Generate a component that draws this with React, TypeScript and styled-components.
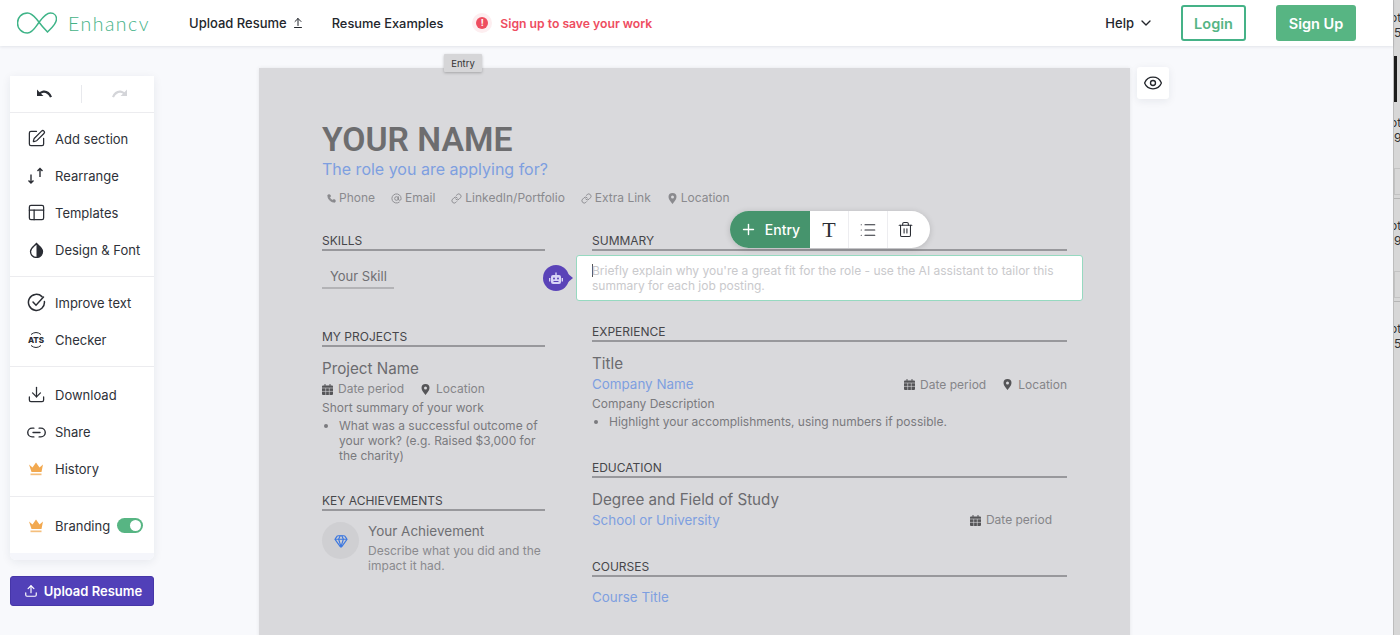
import styled, { createGlobalStyle } from 'styled-components'
import {
  SquarePen, PanelsTopLeft, Download, Link2, Upload, Eye, Plus, List, Trash2, ChevronDown,
  Phone, AtSign, Link, Gem, ArrowUpFromLine,
} from 'lucide-react'

const GlobalStyle = createGlobalStyle`
  html, body { margin: 0; padding: 0; height: 100%; overflow: hidden; }
  body { font-family: Inter, "Liberation Sans", sans-serif; background: #f8f9fc; }
`

function Logo() {
  return (
    <svg width="40" height="22" viewBox="-.5 0 40 22" fill="none" stroke="#3fb488" strokeWidth="1.5">
      <path d="M10 1C4 1 0 5.500 0 11C0 16.500 4 21 10 21C15 21 18 15 21 11C24 7 28 1 33 1C37 1 39 4 39 7C39 12 34 16 30 20C26 16 22 11 19 7C16 3.500 13 1 10 1Z" />
    </svg>
  )
}

function Crown() {
  return (
    <svg width="16" height="14" viewBox="0 0 16 14" fill="#f2a950">
      <path d="M1 2.500l3.500 3L8 .5l3.500 5 3.500-3-1.500 7.500h-10z" />
      <rect x="2.500" y="11.500" width="11" height="1.700" opacity=".75" />
    </svg>
  )
}

function Undo({ off }: { off?: boolean }) {
  return (
    <svg width="17" height="11" viewBox="0 0 17 11" fill={off ? '#d4d5d9' : '#2a2d34'}>
      <g transform={off ? 'translate(17 0) scale(-1 1)' : undefined}>
        <path d="M1 .5v6.500h6.500L5 4.700C7.800 2.800 11.500 3.500 14 8.500l2-.8C13.500 1.300 8 0 3.600 3.200z" />
      </g>
    </svg>
  )
}

function Arrows() {
  return (
    <svg width="18" height="18" viewBox="0 0 18 18" fill="none" stroke="#2a2d34" strokeWidth="1.400">
      <path d="M4 7.500V16M1.500 13.500L4 16l2.500-2.500M13 1.500V10M10.500 4L13 1.500 15.500 4" />
    </svg>
  )
}

function Contrast() {
  return (
    <svg width="15" height="16" viewBox="0 0 15 16">
      <path d="M7.500 1.500C5 4.500 1.500 6 1.500 9.500a6 6 0 0 0 12 0C13.500 6 10 4.500 7.500 1.500z" fill="none" stroke="#2a2d34" strokeWidth="1.300" />
      <path d="M7.500 1.500C10 4.500 13.500 6 13.500 9.500a6 6 0 0 1-6 6z" fill="#2a2d34" />
    </svg>
  )
}

function CheckRing() {
  return (
    <svg width="19" height="19" viewBox="0 0 19 19" fill="none" stroke="#2a2d34" strokeWidth="1.500" strokeLinecap="round">
      <path d="M15 3.600A8 8 0 1 0 17.400 8.500" />
      <path d="M6 9l3 3.200L16.500 4" />
    </svg>
  )
}

function Ats() {
  return (
    <svg width="20" height="18" viewBox="0 0 20 18" fill="none" stroke="#2a2d34" strokeWidth="1">
      <path d="M5 3.500Q10 -.5 15 3.500M5 14.500Q10 18.500 15 14.500" />
      <text x="10" y="11.500" textAnchor="middle" fontSize="8" fontWeight="800" fontFamily="Inter" fill="#2a2d34" stroke="none">ATS</text>
    </svg>
  )
}

function Bot() {
  return (
    <svg width="14" height="13" viewBox="0 0 14 13" fill="#d8d4f5">
      <rect x="2" y="3" width="10" height="9" rx="2" />
      <rect x="6.300" y=".5" width="1.400" height="3" />
      <rect x="0" y="6" width="1.400" height="3.500" />
      <rect x="12.600" y="6" width="1.400" height="3.500" />
      <circle cx="5" cy="6.500" r="1" fill="#5a43b8" />
      <circle cx="9" cy="6.500" r="1" fill="#5a43b8" />
      <rect x="4.500" y="9" width="5" height="1" fill="#5a43b8" />
    </svg>
  )
}

function CalendarMark() {
  return (
    <svg width="11" height="11" viewBox="0 0 11 11">
      <path d="M2.500 0h1v1.500h4V0h1v1.500H10a1 1 0 0 1 1 1V10a1 1 0 0 1-1 1H1a1 1 0 0 1-1-1V2.500a1 1 0 0 1 1-1h1.500z" fill="#555558" />
      <path d="M0 4h11M3.700 4v7M7.300 4v7M0 7.400h11" stroke="#d9d9dc" strokeWidth=".6" />
    </svg>
  )
}

function PinMark({ color = '#555558' }: { color?: string }) {
  return (
    <svg width="11" height="11" viewBox="0 0 11 11">
      <path fillRule="evenodd" fill={color} d="M5.500 0A4 4 0 0 1 9.500 4C9.500 6.500 6.800 9.300 5.500 11C4.200 9.300 1.500 6.500 1.500 4A4 4 0 0 1 5.500 0zM5.500 2.500a1.500 1.500 0 1 0 0 3a1.500 1.500 0 0 0 0-3z" />
    </svg>
  )
}

const mainItems = [
  { label: 'Add section', icon: <SquarePen size={19} strokeWidth={1.6} /> },
  { label: 'Rearrange', icon: <Arrows /> },
  { label: 'Templates', icon: <PanelsTopLeft size={19} strokeWidth={1.6} /> },
  { label: 'Design & Font', icon: <Contrast /> },
]

const contacts = [
  { label: 'Phone', icon: <Phone size={9} fill="#8a8a8e" stroke="#8a8a8e" /> },
  { label: 'Email', icon: <AtSign size={11} /> },
  { label: 'LinkedIn/Portfolio', icon: <Link size={11} /> },
  { label: 'Extra Link', icon: <Link size={11} /> },
  { label: 'Location', icon: <PinMark color="#8a8a8e" /> },
]

function Period({ text }: { text: string }) {
  return (
    <Meta>
      <CalendarMark />
      {text}
    </Meta>
  )
}

function Place() {
  return (
    <Meta>
      <PinMark />
      Location
    </Meta>
  )
}

export default function App() {
  return (
    <Screen>
      <GlobalStyle />
      <Workspace>
        <TopBar>
          <BrandLink>
            <Logo />
            <BrandName>Enhancv</BrandName>
          </BrandLink>
          <UploadLink>Upload Resume <ArrowUpFromLine size={12} /></UploadLink>
          <ExamplesLink>Resume Examples</ExamplesLink>
          <AlertDot>!</AlertDot>
          <AlertText>Sign up to save your work</AlertText>
          <HelpLink>Help <ChevronDown size={16} /></HelpLink>
          <LoginButton>Login</LoginButton>
          <SignUpButton>Sign Up</SignUpButton>
        </TopBar>

        <Body>
          <SideColumn>
            <SideCard>
              <UndoRow>
                <Undo />
                <UndoSep />
                <Undo off />
              </UndoRow>
              <SideGroup $top={7} $bottom={8}>
                {mainItems.map((it) => (
                  <SideItem key={it.label}><IconCell>{it.icon}</IconCell>{it.label}</SideItem>
                ))}
              </SideGroup>
              <SideGroup $top={7} $bottom={8}>
                <SideItem><IconCell><CheckRing /></IconCell>Improve text</SideItem>
                <SideItem><IconCell><Ats /></IconCell>Checker</SideItem>
              </SideGroup>
              <SideGroup $top={9} $bottom={9}>
                <SideItem><IconCell><Download size={19} strokeWidth={1.6} /></IconCell>Download</SideItem>
                <SideItem><IconCell><Link2 size={21} strokeWidth={1.6} /></IconCell>Share</SideItem>
                <SideItem><IconCell><Crown /></IconCell>History</SideItem>
              </SideGroup>
              <SideGroup $top={10} $bottom={9}>
                <SideItem><IconCell><Crown /></IconCell>Branding<Toggle /></SideItem>
              </SideGroup>
              <SideFoot />
            </SideCard>
            <UploadButton><Upload size={14} />Upload Resume</UploadButton>
          </SideColumn>

          <Sheet>
            <Tip>Entry</Tip>
            <Name>YOUR NAME</Name>
            <Role>The role you are applying for?</Role>
            <Contacts>
              {contacts.map((c) => (
                <Contact key={c.label}>{c.icon}{c.label}</Contact>
              ))}
            </Contacts>
            <Columns>
              <div>
                <Section>
                  <SectionTitle>SKILLS</SectionTitle>
                  <Skill>Your Skill</Skill>
                </Section>
                <Section $gap={40}>
                  <SectionTitle>MY PROJECTS</SectionTitle>
                  <ItemTitle>Project Name</ItemTitle>
                  <MetaRow>
                    <Period text="Date period" />
                    <Place />
                  </MetaRow>
                  <Para>Short summary of your work</Para>
                  <Bullets>
                    <li>What was a successful outcome of your work? (e.g. Raised $3,000 for the charity)</li>
                  </Bullets>
                </Section>
                <Section $gap={30}>
                  <SectionTitle>KEY ACHIEVEMENTS</SectionTitle>
                  <Achievement>
                    <GemBadge><Gem size={14} stroke="#3d78e0" strokeWidth={2} /></GemBadge>
                    <div>
                      <AchTitle>Your Achievement</AchTitle>
                      <AchText>Describe what you did and the impact it had.</AchText>
                    </div>
                  </Achievement>
                </Section>
              </div>
              <div>
                <Section>
                  <SectionTitle>SUMMARY</SectionTitle>
                  <Editor>
                    <BotBubble><Bot /></BotBubble>
                    <Caret />
                    Briefly explain why you're a great fit for the role - use the AI assistant to tailor this summary for each job posting.
                  </Editor>
                  <Floating>
                    <AddEntry><Plus size={17} />Entry</AddEntry>
                    <ToolCell><SerifT>T</SerifT></ToolCell>
                    <ToolCell><List size={18} strokeWidth={1.5} /></ToolCell>
                    <ToolCell><Trash2 size={17} strokeWidth={1.5} /></ToolCell>
                  </Floating>
                </Section>
                <Section $gap={23}>
                  <SectionTitle>EXPERIENCE</SectionTitle>
                  <ItemTitle>Title</ItemTitle>
                  <SplitRow>
                    <LinkText>Company Name</LinkText>
                    <MetaRow>
                      <Period text="Date period" />
                      <Place />
                    </MetaRow>
                  </SplitRow>
                  <Para>Company Description</Para>
                  <Bullets><li>Highlight your accomplishments, using numbers if possible.</li></Bullets>
                </Section>
                <Section $gap={31}>
                  <SectionTitle>EDUCATION</SectionTitle>
                  <ItemTitle>Degree and Field of Study</ItemTitle>
                  <SplitRow $inset={15}>
                    <LinkText>School or University</LinkText>
                    <Period text="Date period" />
                  </SplitRow>
                </Section>
                <Section $gap={29}>
                  <SectionTitle>COURSES</SectionTitle>
                  <CourseLink>Course Title</CourseLink>
                </Section>
              </div>
            </Columns>
          </Sheet>

          <EyeButton><Eye size={20} strokeWidth={1.6} /></EyeButton>
        </Body>
      </Workspace>

      <Strip>
        <StripText $top={10}><StripClip>ot</StripClip><br />5</StripText>
        <StripDark />
        <StripText $top={13}><StripClip>ot</StripClip><br />9</StripText>
        <StripBox />
        <StripLine />
        <StripText $top={19}><StripClip>ot</StripClip><br />9.</StripText>
        <StripBox />
        <StripLine />
        <StripText $top={19}><StripClip>ot</StripClip><br />5</StripText>
      </Strip>
    </Screen>
  )
}

const Screen = styled.div`
  display: flex;
  width: 1400px;
  height: 635px;
  overflow: hidden;
`

const Workspace = styled.div`
  width: 1393px;
  flex: none;
  display: flex;
  flex-direction: column;
  background: #f8f9fc;
`

const TopBar = styled.header`
  height: 46px;
  flex: none;
  display: flex;
  align-items: center;
  padding: 0 37px 0 17px;
  background: #fff;
  box-shadow: 0 1px 3px rgba(30, 40, 70, .1);
  position: relative;
  z-index: 2;
`

const BrandLink = styled.div`
  display: flex;
  align-items: center;
  gap: 11px;
`

const BrandName = styled.span`
  font-family: Lato, sans-serif;
  font-weight: 300;
  font-size: 19.500px;
  letter-spacing: 1.500px;
  color: #45b287;
`

const NavLink = styled.a`
  display: inline-flex;
  align-items: center;
  gap: 5px;
  font-size: 13px;
  font-weight: 500;
  color: #23262c;
`

const UploadLink = styled(NavLink)`
  margin-left: 39px;
`

const ExamplesLink = styled(NavLink)`
  margin-left: 28px;
  font-size: 12.800px;
`

const AlertDot = styled.span`
  width: 12px;
  height: 12px;
  margin-left: 33px;
  border-radius: 50%;
  background: #ee4d5f;
  box-shadow: 0 0 0 4px #fdeef0;
  color: #fff;
  font-size: 9px;
  font-weight: 700;
  line-height: 12px;
  text-align: center;
`

const AlertText = styled.span`
  margin-left: 12px;
  font-size: 12.200px;
  font-weight: 600;
  color: #ee4d5f;
`

const HelpLink = styled(NavLink)`
  margin-left: auto;
  gap: 4px;
`

const LoginButton = styled.button`
  width: 65px;
  height: 36px;
  margin-left: 27px;
  border: 2px solid #45b287;
  border-radius: 3px;
  background: #fff;
  color: #55b585;
  font: 600 14.500px Inter, sans-serif;
`

const SignUpButton = styled.button`
  width: 80px;
  height: 36px;
  margin-left: 30px;
  border: 0;
  border-radius: 3px;
  background: #57b583;
  color: #fff;
  font: 600 14.500px Inter, sans-serif;
`

const Body = styled.main`
  flex: 1;
  min-height: 0;
  display: flex;
  align-items: flex-start;
`

const SideColumn = styled.aside`
  width: 144px;
  flex: none;
  margin: 30px 0 0 10px;
  display: flex;
  flex-direction: column;
  gap: 16px;
`

const SideCard = styled.div`
  background: #fff;
  border-radius: 0 0 6px 6px;
  box-shadow: 0 2px 10px rgba(30, 40, 70, .08);
  overflow: hidden;
`

const UndoRow = styled.div`
  height: 36px;
  display: flex;
  align-items: center;
  justify-content: space-around;
  padding: 0 12px;
`

const UndoSep = styled.i`
  width: 1px;
  height: 18px;
  background: #e8e9ed;
`

const SideGroup = styled.div<{ $top: number; $bottom: number }>`
  border-top: 1px solid #ececef;
  padding: ${({ $top }) => $top}px 0 ${({ $bottom }) => $bottom}px;
  display: flex;
  flex-direction: column;
`

const SideItem = styled.div`
  height: 37px;
  display: flex;
  align-items: center;
  padding-left: 16px;
  font-size: 13px;
  color: #2e3138;
`

const IconCell = styled.span`
  width: 20px;
  height: 20px;
  margin-right: 9px;
  display: grid;
  place-items: center;
  color: #2a2d34;
`

const Toggle = styled.span`
  position: relative;
  width: 26px;
  height: 15px;
  margin-left: 7px;
  border-radius: 8px;
  background: #57b583;
  &::after {
    content: '';
    position: absolute;
    top: 2px;
    right: 2px;
    width: 11px;
    height: 11px;
    border-radius: 50%;
    background: #fff;
  }
`

const SideFoot = styled.div`
  height: 7px;
  background: #f5f6fb;
`

const UploadButton = styled.button`
  height: 30px;
  display: flex;
  align-items: center;
  justify-content: center;
  gap: 6px;
  padding: 0 0 0 2px;
  border: 1px solid #4636a8;
  border-radius: 3px;
  background: #5140b8;
  color: #fff;
  font: 600 13px Inter, sans-serif;
`

const Sheet = styled.section`
  position: relative;
  width: 871px;
  height: 600px;
  flex: none;
  box-sizing: border-box;
  margin: 22px 0 0 105px;
  padding: 54px 63px 0;
  background: #d9d9dc;
  box-shadow: 0 0 4px rgba(0, 0, 0, .08);
`

const Tip = styled.span`
  position: absolute;
  top: -14px;
  left: 185px;
  width: 38px;
  height: 18px;
  display: grid;
  place-items: center;
  background: #d6d6d8;
  box-shadow: 0 1px 3px rgba(0, 0, 0, .25);
  border-radius: 1px;
  font-size: 9.500px;
  color: #333;
`

const Name = styled.h1`
  margin: 0;
  font: 600 33.700px/36px Roboto, Inter, sans-serif;
  color: #6d6d6f;
`

const Role = styled.div`
  font-size: 16px;
  line-height: 22px;
  color: #7e9fe0;
`

const Contacts = styled.div`
  display: flex;
  gap: 16px;
  margin: 9px 0 0 5px;
`

const Contact = styled.span`
  display: inline-flex;
  align-items: center;
  gap: 3px;
  font-size: 12px;
  line-height: 18px;
  color: #8a8a8e;
`

const Columns = styled.div`
  display: grid;
  grid-template-columns: 223px 475px;
  column-gap: 47px;
  margin-top: 26px;
`

const Section = styled.div<{ $gap?: number }>`
  position: relative;
  margin-top: ${({ $gap }) => $gap ?? 0}px;
`

const SectionTitle = styled.h2`
  margin: 0;
  border-bottom: 2px solid #98989c;
  font-size: 12px;
  font-weight: 400;
  line-height: 16px;
  color: #46464a;
`

const Skill = styled.div`
  width: 64px;
  margin-top: 10px;
  padding: 6px 0 2px 8px;
  border-bottom: 2px solid #b3b3b6;
  font-size: 13px;
  line-height: 18px;
  color: #6f6f73;
`

const ItemTitle = styled.div`
  margin-top: 12px;
  font-size: 15.200px;
  line-height: 20px;
  color: #6b6b6f;
`

const MetaRow = styled.div`
  display: flex;
  gap: 16px;
  margin-top: 1px;
`

const Meta = styled.span`
  display: inline-flex;
  align-items: center;
  gap: 5px;
  font-size: 12px;
  line-height: 18px;
  color: #858589;
`

const Para = styled.div`
  margin-top: 1px;
  font-size: 12px;
  line-height: 17px;
  color: #7a7a7e;
`

const Bullets = styled.ul`
  margin: 0;
  padding: 0 0 0 17px;
  font-size: 12px;
  line-height: 15px;
  color: #7a7a7e;
  li { margin-top: 2px; }
`

const SplitRow = styled.div<{ $inset?: number }>`
  display: flex;
  align-items: center;
  justify-content: space-between;
  padding-right: ${({ $inset }) => $inset ?? 0}px;
`

const LinkText = styled.div`
  font-size: 13.400px;
  line-height: 20px;
  color: #7e9fe0;
`

const CourseLink = styled(LinkText)`
  margin-top: 10px;
`

const Achievement = styled.div`
  display: flex;
  gap: 9px;
  margin-top: 11px;
`

const GemBadge = styled.span`
  width: 37px;
  height: 37px;
  flex: none;
  display: grid;
  place-items: center;
  border-radius: 50%;
  background: #cfcfd2;
`

const AchTitle = styled.div`
  font-size: 13.500px;
  line-height: 18px;
  color: #6f6f73;
`

const AchText = styled.div`
  margin-top: 3px;
  font-size: 12px;
  line-height: 15px;
  color: #8a8a8e;
`

const Editor = styled.div`
  position: relative;
  box-sizing: border-box;
  height: 46px;
  margin: 4px -16px 0;
  padding: 7px 15px 0;
  border: 1px solid #96d9c0;
  border-radius: 3px;
  background: #fff;
  font-size: 12px;
  line-height: 15px;
  color: #c9c9cc;
`

const Caret = styled.i`
  display: inline-block;
  width: 1px;
  height: 13px;
  margin-right: -1px;
  vertical-align: -2px;
  background: #555;
`

const BotBubble = styled.span`
  position: absolute;
  top: 9px;
  left: -34px;
  width: 26px;
  height: 26px;
  display: grid;
  place-items: center;
  border-radius: 50%;
  background: #5a43b8;
  &::after {
    content: '';
    position: absolute;
    right: -4px;
    top: 8px;
    border-left: 6px solid #5a43b8;
    border-top: 5px solid transparent;
    border-bottom: 5px solid transparent;
  }
`

const Floating = styled.div`
  position: absolute;
  top: -22px;
  left: 138px;
  height: 37px;
  display: flex;
  border-radius: 19px;
  overflow: hidden;
  background: #fff;
  box-shadow: 0 1px 6px rgba(0, 0, 0, .16);
`

const AddEntry = styled.button`
  width: 80px;
  display: flex;
  align-items: center;
  justify-content: center;
  gap: 8px;
  padding: 0;
  border: 0;
  background: #46946d;
  color: #fff;
  font: 500 14px Inter, sans-serif;
`

const ToolCell = styled.span`
  width: 38px;
  display: grid;
  place-items: center;
  color: #2a2d34;
  & + & { border-left: 1px solid #ededf0; }
  &:last-child { width: 43px; padding-right: 7px; box-sizing: border-box; }
`

const SerifT = styled.span`
  font: 400 22px "Liberation Serif", serif;
`

const EyeButton = styled.button`
  width: 32px;
  height: 32px;
  flex: none;
  margin: 21px 0 0 7px;
  display: grid;
  place-items: center;
  padding: 0;
  border: 0;
  border-radius: 3px;
  background: #fff;
  color: #24272d;
  box-shadow: 0 2px 8px rgba(30, 40, 70, .08);
`

const Strip = styled.div`
  flex: 1;
  overflow: hidden;
  background: #d7d7d7;
  border-left: 1px solid #bdbdbd;
`

const StripText = styled.div<{ $top: number }>`
  margin-top: ${({ $top }) => $top}px;
  font-size: 12px;
  line-height: 15px;
  color: #333;
  white-space: nowrap;
`

const StripClip = styled.span`
  display: inline-block;
  margin-left: -4px;
`

const StripDark = styled.div`
  width: 3px;
  height: 46px;
  margin: 16px 0 0;
  background: #1c1c1c;
`

const StripBox = styled.div`
  height: 27px;
  margin-top: 23px;
  border: 1px solid #c3c3c3;
  border-right: 0;
  box-sizing: border-box;
`

const StripLine = styled.div`
  height: 1px;
  margin-top: 3px;
  background: #b5b5b5;
`
